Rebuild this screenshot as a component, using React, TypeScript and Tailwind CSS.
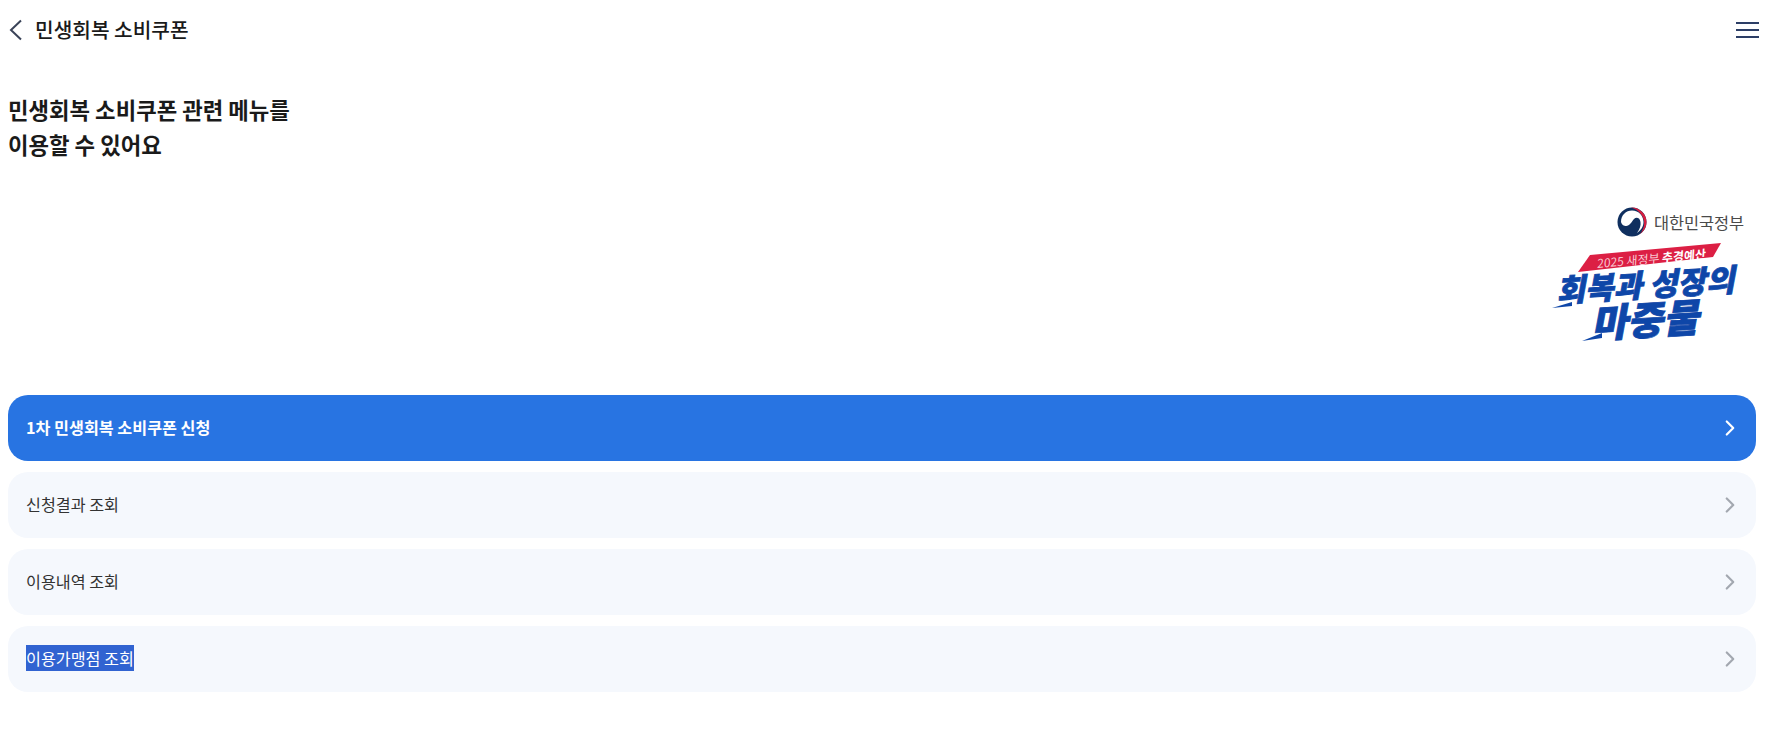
import React from 'react';
import { ChevronRight } from 'lucide-react';

const FONT = "font-['Noto_Sans_CJK_KR','Noto_Sans',sans-serif]";

const MENUS = [
  { label: '1차 민생회복 소비쿠폰 신청', primary: true },
  { label: '신청결과 조회' },
  { label: '이용내역 조회' },
  { label: '이용가맹점 조회', selected: true },
];

// 태극 mark
const Emblem: React.FC = () => (
  <svg width="30" height="30" viewBox="0 0 30 30" className="shrink-0">
    <circle cx="15" cy="15" r="14.500" fill="#0f2f5f" />
    <path d="M4 15C4 8 9 3.500 15 3.500 22 3.500 26.500 9 26.500 15c0 4-2 8-6.500 11 3-4 4-8 3.500-11-.5-4-4-5.500-6.500-3-2.500 3-4.500 7.500-8.500 7C5.500 18.500 4.500 16.500 4 15z" fill="#fff" />
    <path d="M14 .5C22 .2 29.500 6.500 29.500 15c0 5.500-3 9.500-6.500 12 2.300-3 4.200-6.500 4.200-11C27.200 9 21.500 2.500 14 .5z" fill="#d81e3f" />
  </svg>
);

// 추경예산 campaign lockup
const Campaign: React.FC = () => (
  <div className="flex flex-col items-end">
    <div className="flex h-[30px] items-center gap-[7px]">
      <Emblem />
      <span className="text-[16.400px] leading-[24px] tracking-[-0.1px] text-[#4a4a4a]">대한민국정부</span>
    </div>
    <svg width="190" height="100" viewBox="0 0 190 100" className="mt-[6px] mr-[4px] overflow-visible">
      <polygon points="40,12 171,0 163,14 28,29" fill="#dc1f44" />
      <text transform="translate(47 25) rotate(-5) skewX(-8)" fontSize="12" fill="#f9c9d3">
        2025 새정부 <tspan fontWeight="700" fill="#fff">추경예산</tspan>
      </text>
      <g fill="#0e46a8" stroke="#0e46a8" strokeWidth="0.8" fontWeight="900">
        <text transform="translate(7 59) rotate(-3.500) skewX(-14)" fontSize="31">회복과 성장의</text>
        <text transform="translate(42 95) rotate(-3.500) skewX(-14)" fontSize="39">마중물</text>
      </g>
      <polygon points="2,65 22,59 22,63" fill="#0e46a8" />
      <polygon points="32,98 52,90 52,95" fill="#0e46a8" />
    </svg>
  </div>
);

export default function App() {
  return (
    <div className={`${FONT} min-h-[730px] bg-white text-[#1a1a1a]`}>
      {/* Header */}
      <header className="flex h-[60px] items-center justify-between pr-[11px] pl-[9px]">
        <div className="flex items-center gap-[13px]">
          <svg width="13" height="22" viewBox="0 0 13 22" fill="none" stroke="#3a4358" strokeWidth="2">
            <path d="M12 1.500 2 11l10 9.500" />
          </svg>
          <h1 className="text-[20.250px] leading-[30px] font-medium">민생회복 소비쿠폰</h1>
        </div>
        <div className="flex w-[23px] flex-col gap-[5px]">
          <span className="h-[2px] bg-[#2c3e66]" />
          <span className="h-[2px] bg-[#2c3e66]" />
          <span className="h-[2px] bg-[#2c3e66]" />
        </div>
      </header>

      <div className="px-[8px]">
        <h2 className="pt-[32px] text-[22.300px] leading-[35px] font-bold">
          민생회복 소비쿠폰 관련 메뉴를
          <br />
          이용할 수 있어요
        </h2>

        <div className="mt-[45px] flex justify-end pr-[18px]">
          <Campaign />
        </div>

        {/* Menu list */}
        <div className="mt-[52px] mr-[6px] flex flex-col gap-[11px]">
          {MENUS.map((menu) => (
            <div
              key={menu.label}
              className={`flex h-[66px] items-center justify-between rounded-[20px] pr-[13px] pl-[18px] text-[16.200px] ${
                menu.primary ? 'bg-[#2874e2] font-bold text-white' : 'bg-[#f5f8fd] text-[#333333]'
              }`}
            >
              <span className={`mb-[2px] ${menu.selected ? 'bg-[#3163d1] leading-[26px] text-white' : ''}`}>
                {menu.label}
              </span>
              <ChevronRight
                className={`h-[26px] w-[26px] ${menu.primary ? 'text-white' : 'text-[#a3a8b0]'}`}
                strokeWidth={2}
              />
            </div>
          ))}
        </div>
      </div>
    </div>
  );
}
